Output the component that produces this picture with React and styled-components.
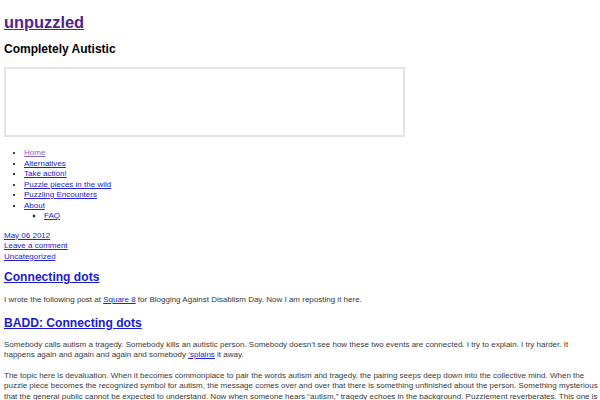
import React from "react";
import styled, { createGlobalStyle } from "styled-components";

const Global = createGlobalStyle`
  html, body { margin: 0; padding: 0; background: #fff; }
  body { padding: 4px; font-family: "Liberation Sans", Arial, sans-serif; color: #333; overflow: hidden; }
`;

const Page = styled.div`
  display: flex;
  flex-direction: column;
`;

const SiteTitle = styled.a`
  display: block;
  margin-top: 8px;
  font-size: 16.4px;
  font-weight: 700;
  color: #55218f;
  text-decoration: underline;
  align-self: flex-start;
  line-height: 20px;
`;

const Tagline = styled.h2`
  margin: 10px 0 0;
  font-size: 12px;
  line-height: 14px;
  font-weight: 700;
  color: #000;
`;

const Frame = styled.div`
  margin-top: 11px;
  width: 397px;
  height: 66px;
  border: 2px solid #e4e4e4;
`;

const Menu = styled.ul`
  margin: 11px 0 0;
  padding-left: 20px;
  font-size: 8px;
  line-height: 10.5px;
  list-style: disc;
  color: #000;
`;

const SubMenu = styled.ul`
  margin: 0;
  padding-left: 20px;
  list-style: circle;
`;

const Link = styled.a`
  color: ${(p) => (p.$visited ? "#8a5fc0" : "#2222dd")};
  text-decoration: underline;
`;

const Meta = styled.div`
  margin-top: 9px;
  display: flex;
  flex-direction: column;
  font-size: 8px;
  line-height: 10.5px;
  align-items: flex-start;
`;

const PostTitle = styled.h2`
  margin: ${(p) => p.$mt}px 0 0;
  font-size: 12.1px;
  line-height: 15px;
  font-weight: 700;
  a { color: #1a1ad6; text-decoration: underline; }
`;

const Text = styled.p`
  margin: ${(p) => p.$mt}px 0 0;
  font-size: 8px;
  line-height: 10.5px;
  color: #3a3a3a;
  white-space: nowrap;
`;

export default function App() {
  return (
    <Page>
      <Global />
      <SiteTitle href="#">unpuzzled</SiteTitle>
      <Tagline>Completely Autistic</Tagline>
      <Frame />
      <Menu>
        <li><Link $visited href="#">Home</Link></li>
        <li><Link href="#">Alternatives</Link></li>
        <li><Link href="#">Take action!</Link></li>
        <li><Link href="#">Puzzle pieces in the wild</Link></li>
        <li><Link href="#">Puzzling Encounters</Link></li>
        <li>
          <Link href="#">About</Link>
          <SubMenu>
            <li><Link href="#">FAQ</Link></li>
          </SubMenu>
        </li>
      </Menu>
      <Meta>
        <Link href="#">May 06 2012</Link>
        <Link href="#">Leave a comment</Link>
        <Link href="#">Uncategorized</Link>
      </Meta>
      <PostTitle $mt={8}><a href="#">Connecting dots</a></PostTitle>
      <Text $mt={10}>
        I wrote the following post at <Link href="#">Square 8</Link> for Blogging Against Disablism Day. Now I am reposting it here.
      </Text>
      <PostTitle $mt={10}><a href="#">BADD: Connecting dots</a></PostTitle>
      <Text $mt={9}>
        Somebody calls autism a tragedy. Somebody kills an autistic person. Somebody doesn’t see how these two events are connected. I try to explain. I try harder. It
        <br />
        happens again and again and again and somebody <Link href="#">‘splains</Link> it away.
      </Text>
      <Text $mt={10}>
        The topic here is devaluation. When it becomes commonplace to pair the words autism and tragedy, the pairing seeps deep down into the collective mind. When the
        <br />
        puzzle piece becomes the recognized symbol for autism, the message comes over and over that there is something unfinished about the person. Something mysterious
        <br />
        that the general public cannot be expected to understand. Now when someone hears “autism,” tragedy echoes in the background. Puzzlement reverberates. This one is
      </Text>
    </Page>
  );
}
